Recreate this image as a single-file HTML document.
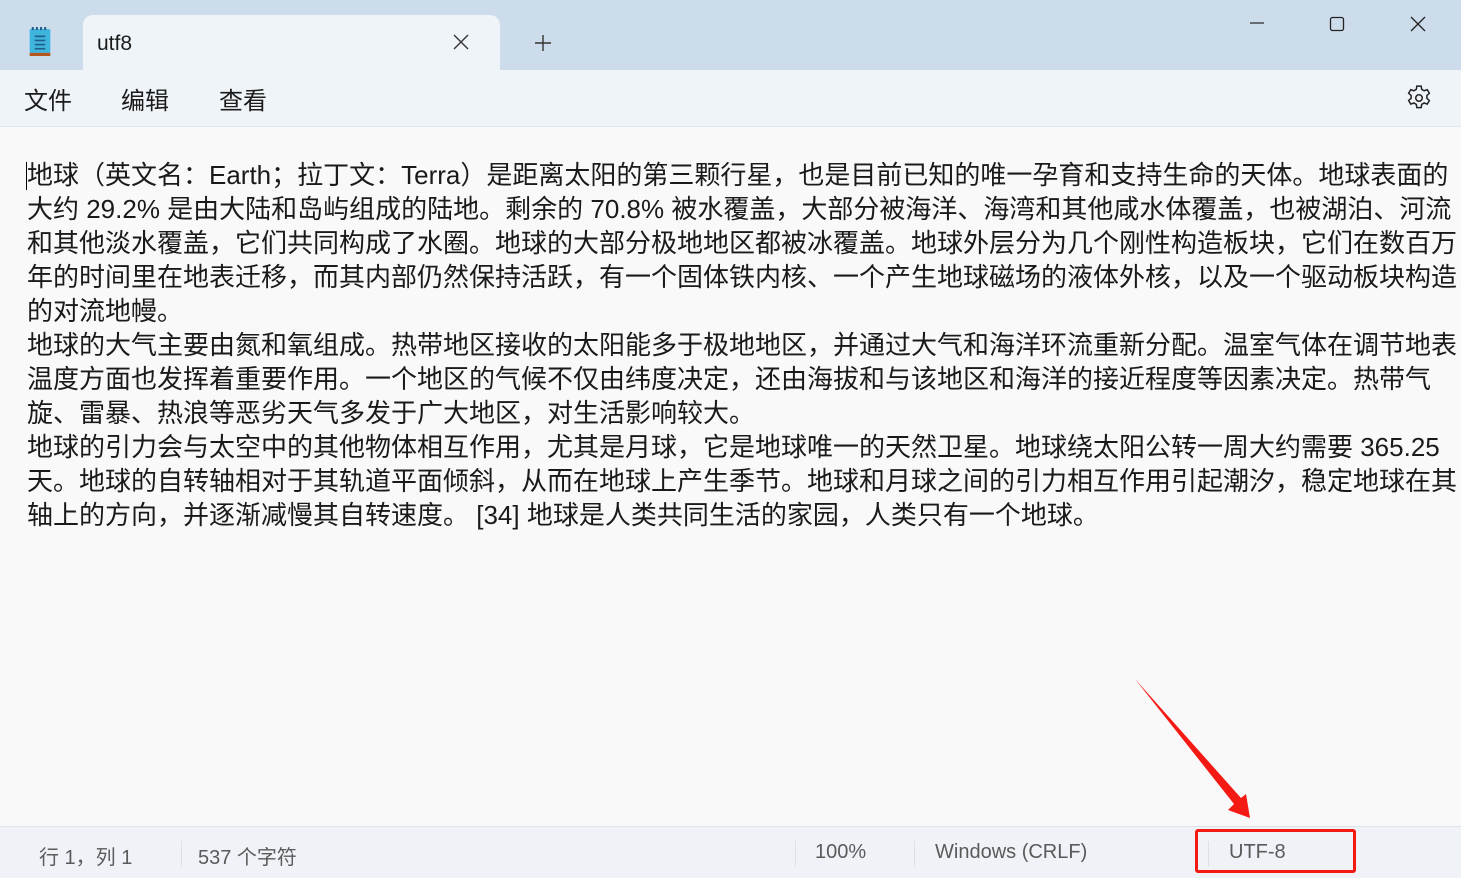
<!DOCTYPE html>
<html><head><meta charset="utf-8"><style>
*{margin:0;padding:0;box-sizing:border-box}
body{width:1461px;height:878px;overflow:hidden;background:#f9f9f9;font-family:"Liberation Sans","Noto Sans CJK SC",sans-serif;position:relative;color:#1a1a1a}
.title{position:absolute;left:0;top:0;width:1461px;height:70px;background:#cddceb}
.tab{position:absolute;left:83px;top:15px;width:417px;height:56px;background:#eff4f9;border-radius:10px 10px 0 0}
.menu{position:absolute;left:0;top:70px;width:1461px;height:57px;background:#eff4f9;border-bottom:1px solid #e2e6ea}
.menu span{position:absolute;top:11px;font-size:24px;color:#1b1b1b}
.text{position:absolute;left:27px;top:158px;font-size:26px;line-height:34px;white-space:nowrap;color:#1a1a1a}
.text div{white-space:nowrap}
.status{position:absolute;left:0;top:826px;width:1461px;height:52px;background:#eff3f8;border-top:1px solid #dfe3e8;font-size:20px;color:#5a5a5a}
.status span{position:absolute;top:14px}
.sep{position:absolute;top:14px;width:1px;height:26px;background:#dde1e5}
</style></head><body>
<div class="title"></div>
<svg style="position:absolute;left:26px;top:26px" width="28" height="31" viewBox="0 0 24 30"><rect x="2" y="3" width="20" height="23" rx="1" fill="#3fb4dc"/><rect x="2" y="26" width="20" height="3" fill="#b5541c"/><g stroke="#1d5f8a" stroke-width="1.6"><line x1="7" y1="10" x2="17" y2="10"/><line x1="7" y1="14" x2="17" y2="14"/><line x1="7" y1="18" x2="17" y2="18"/><line x1="7" y1="22" x2="17" y2="22"/></g><g fill="#1d5f8a"><rect x="4" y="1" width="2" height="3"/><rect x="8" y="1" width="2" height="3"/><rect x="12" y="1" width="2" height="3"/><rect x="16" y="1" width="2" height="3"/></g></svg>
<div class="tab"></div>
<div style="position:absolute;left:97px;top:32px;font-size:21px;color:#1b1b1b">utf8</div>
<svg style="position:absolute;left:452px;top:33px" width="18" height="18"><path d="M2 2L16 16M16 2L2 16" stroke="#333" stroke-width="1.4"/></svg>
<svg style="position:absolute;left:533px;top:33px" width="20" height="20"><path d="M10 2V18M2 10H18" stroke="#333" stroke-width="1.4"/></svg>
<svg style="position:absolute;left:1249px;top:18px" width="16" height="10"><path d="M1 5H15" stroke="#222" stroke-width="1.2"/></svg>
<svg style="position:absolute;left:1329px;top:16px" width="16" height="16"><rect x="1.5" y="1.5" width="13" height="13" rx="2" fill="none" stroke="#222" stroke-width="1.3"/></svg>
<svg style="position:absolute;left:1410px;top:16px" width="16" height="16"><path d="M1 1L15 15M15 1L1 15" stroke="#222" stroke-width="1.3"/></svg>
<div class="menu">
<span style="left:24px">文件</span><span style="left:121px">编辑</span><span style="left:219px">查看</span>
<svg style="position:absolute;left:1404px;top:13px" width="30" height="30" viewBox="0 0 24 24"><path fill="none" stroke="#222" stroke-width="1.2" d="M10.3 2.5h3.4l.5 2.6 1.9 1.1 2.5-.9 1.7 2.9-2 1.8v2.2l2 1.8-1.7 2.9-2.5-.9-1.9 1.1-.5 2.6h-3.4l-.5-2.6-1.9-1.1-2.5.9-1.7-2.9 2-1.8v-2.2l-2-1.8 1.7-2.9 2.5.9 1.9-1.1z"/><circle cx="12" cy="12" r="2.6" fill="none" stroke="#222" stroke-width="1.2"/></svg>
</div>
<div style="position:absolute;left:26px;top:162px;width:1px;height:28px;background:#000"></div>
<div class="text">
<div>地球（英文名：Earth；拉丁文：Terra）是距离太阳的第三颗行星，也是目前已知的唯一孕育和支持生命的天体。地球表面的</div>
<div>大约 29.2% 是由大陆和岛屿组成的陆地。剩余的 70.8% 被水覆盖，大部分被海洋、海湾和其他咸水体覆盖，也被湖泊、河流</div>
<div>和其他淡水覆盖，它们共同构成了水圈。地球的大部分极地地区都被冰覆盖。地球外层分为几个刚性构造板块，它们在数百万</div>
<div>年的时间里在地表迁移，而其内部仍然保持活跃，有一个固体铁内核、一个产生地球磁场的液体外核，以及一个驱动板块构造</div>
<div>的对流地幔。</div>
<div>地球的大气主要由氮和氧组成。热带地区接收的太阳能多于极地地区，并通过大气和海洋环流重新分配。温室气体在调节地表</div>
<div>温度方面也发挥着重要作用。一个地区的气候不仅由纬度决定，还由海拔和与该地区和海洋的接近程度等因素决定。热带气</div>
<div>旋、雷暴、热浪等恶劣天气多发于广大地区，对生活影响较大。</div>
<div>地球的引力会与太空中的其他物体相互作用，尤其是月球，它是地球唯一的天然卫星。地球绕太阳公转一周大约需要 365.25</div>
<div>天。地球的自转轴相对于其轨道平面倾斜，从而在地球上产生季节。地球和月球之间的引力相互作用引起潮汐，稳定地球在其</div>
<div>轴上的方向，并逐渐减慢其自转速度。 [34]  地球是人类共同生活的家园，人类只有一个地球。</div>
</div>
<div class="status">
<span style="left:39px">行 1，列 1</span>
<div class="sep" style="left:181px"></div>
<span style="left:198px">537 个字符</span>
<div class="sep" style="left:795px"></div>
<span style="left:815px">100%</span>
<div class="sep" style="left:914px"></div>
<span style="left:935px">Windows (CRLF)</span>
<div class="sep" style="left:1208px"></div>
<span style="left:1229px">UTF-8</span>
</div>
<div style="position:absolute;left:1195px;top:829px;width:161px;height:44px;border:3px solid #f41a14;border-radius:3px"></div>
<svg style="position:absolute;left:0;top:0" width="1461" height="878"><path d="M1135 679 L1241 798 L1246 794 L1250 818 L1228 810 L1234 804 Z" fill="#f41a14"/></svg>
</body></html>
